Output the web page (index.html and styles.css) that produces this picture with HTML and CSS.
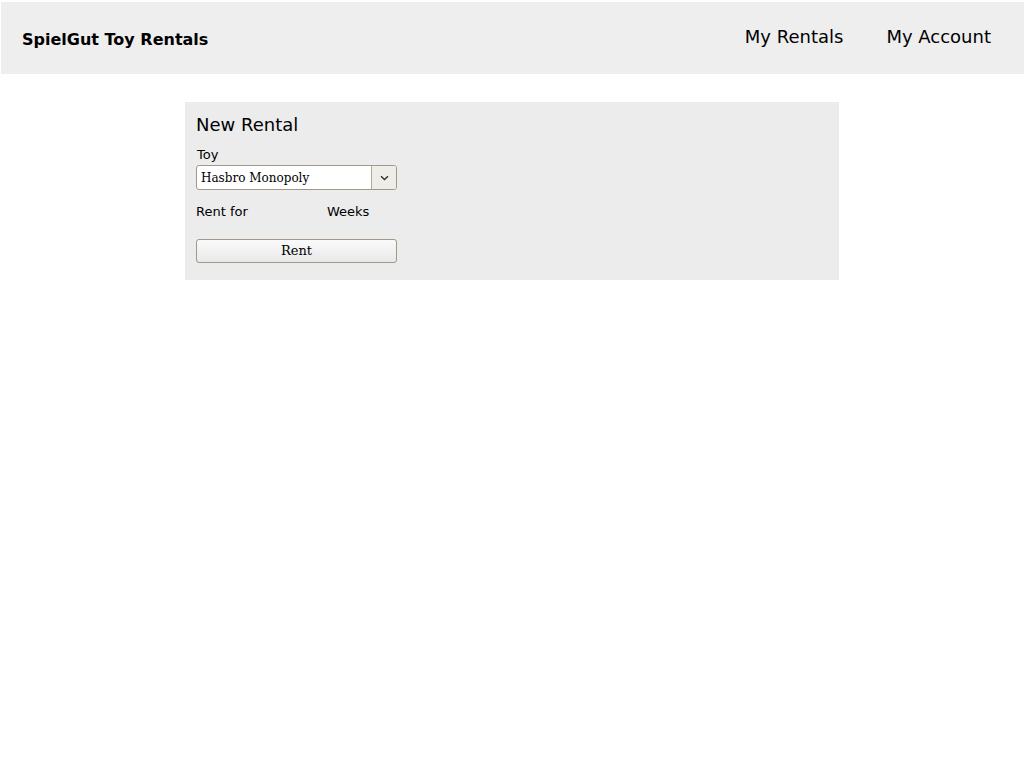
FILE: index.html
```html
<!DOCTYPE html>
<html>
<head>
<meta charset="utf-8">
<link rel="stylesheet" href="styles.css">
</head>
<body>
<header class="topbar">
  <div class="brand">SpielGut Toy Rentals</div>
  <nav class="nav">
    <a class="nav-link" href="#">My Rentals</a>
    <a class="nav-link" href="#">My Account</a>
  </nav>
</header>
<main class="main">
  <section class="card">
    <h2 class="card-title">New Rental</h2>
    <label class="field-label">Toy</label>
    <div class="select">
      <span class="select-value">Hasbro Monopoly</span>
      <span class="select-arrow"><svg width="9" height="6" viewBox="0 0 9 6"><path d="M1 1.2 L4.5 4.6 L8 1.2" fill="none" stroke="#333" stroke-width="1.4"/></svg></span>
    </div>
    <div class="duration">
      <span class="dur-label">Rent for</span>
      <span class="dur-unit">Weeks</span>
    </div>
    <button class="rent-btn">Rent</button>
  </section>
</main>
</body>
</html>
```

FILE: styles.css
```css
html, body {
  margin: 0;
  padding: 0;
  background: #ffffff;
  font-family: "DejaVu Sans", sans-serif;
  color: #000;
}
.topbar {
  margin: 2px 0 0 1px;
  height: 72px;
  background: #eeeeee;
  display: flex;
  align-items: center;
  justify-content: space-between;
  padding: 0 33px 0 21px;
}
.brand {
  font-weight: bold;
  font-size: 16px;
  padding-top: 2px;
}
.nav {
  display: flex;
  gap: 43px;
  padding-bottom: 3px;
}
.nav-link {
  font-size: 18px;
  color: #000;
  text-decoration: none;
}
.main {
  display: flex;
  justify-content: center;
  padding-top: 28px;
}
.card {
  width: 654px;
  height: 178px;
  box-sizing: border-box;
  background: #ececec;
  padding: 12px 11px;
}
.card-title {
  margin: 0;
  font-size: 18px;
  font-weight: normal;
  line-height: 22px;
}
.field-label {
  display: block;
  font-size: 13px;
  margin: 11px 0 2px 1px;
  line-height: 16px;
}
.select {
  width: 201px;
  height: 25px;
  box-sizing: border-box;
  border: 1px solid #a3978a;
  border-radius: 3px;
  background: #fff;
  display: flex;
  overflow: hidden;
}
.select-value {
  flex: 1;
  font-family: "DejaVu Serif", serif;
  font-size: 12px;
  line-height: 23px;
  padding: 1px 0 0 4px;
}
.select-arrow {
  width: 24px;
  border-left: 1px solid #b3aa9c;
  background: #efede8;
  display: flex;
  align-items: center;
  justify-content: center;
}
.duration {
  display: flex;
  font-size: 13px;
  margin-top: 14px;
  line-height: 16px;
}
.dur-label {
  width: 131px;
}
.rent-btn {
  display: block;
  margin-top: 19px;
  width: 201px;
  height: 24px;
  border: 1px solid #a3978a;
  border-radius: 3px;
  background: linear-gradient(#fafafa, #e9e9e9);
  font-family: "DejaVu Serif", serif;
  font-size: 13px;
  color: #000;
  padding: 0 0 2px;
}
```
